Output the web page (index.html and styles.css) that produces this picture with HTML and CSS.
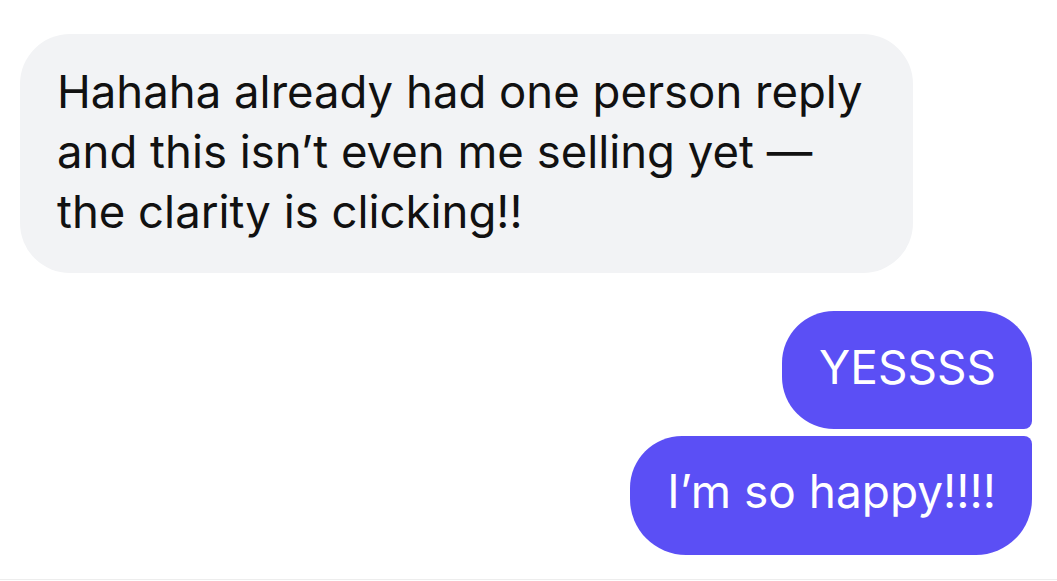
FILE: index.html
```html
<!DOCTYPE html>
<html lang="en">
<head>
<meta charset="utf-8">
<title>Chat</title>
<link rel="stylesheet" href="styles.css">
</head>
<body>
<main class="chat">
  <div class="bubble incoming">Hahaha already had one person reply<br>and this isn’t even me selling yet —<br>the clarity is clicking!!</div>
  <div class="group outgoing">
    <div class="bubble out first">YESSSS</div>
    <div class="bubble out last">I’m so happy!!!!</div>
  </div>
</main>
</body>
</html>
```
FILE: styles.css
```css
html, body {
  margin: 0;
  padding: 0;
  background: #ffffff;
}
body {
  width: 1057px;
  height: 581px;
  overflow: hidden;
  font-family: Inter, "Liberation Sans", sans-serif;
}
.chat {
  box-sizing: border-box;
  height: 580px;
  padding: 34px 25px 0 20px;
  display: flex;
  flex-direction: column;
  border-bottom: 1px solid #ededed;
}
.bubble {
  line-height: 60px;
  box-sizing: border-box;
}
.incoming {
  font-size: 45.5px;
  width: 893px;
  height: 239px;
  padding: 28px 37px 0;
  background: #f2f3f5;
  color: #111111;
  border-radius: 50px;
}
.group {
  margin-top: 38px;
  display: flex;
  flex-direction: column;
  align-items: flex-end;
  gap: 7px;
}
.out {
  font-size: 46px;
  background: #5b4ff5;
  color: #ffffff;
  padding: 0 36px 0 37px;
}
.first {
  height: 118px;
  padding-top: 26px;
  border-radius: 52px 52px 8px 52px;
}
.last {
  height: 119px;
  padding-top: 25px;
  border-radius: 52px 8px 56px 56px;
}
```
